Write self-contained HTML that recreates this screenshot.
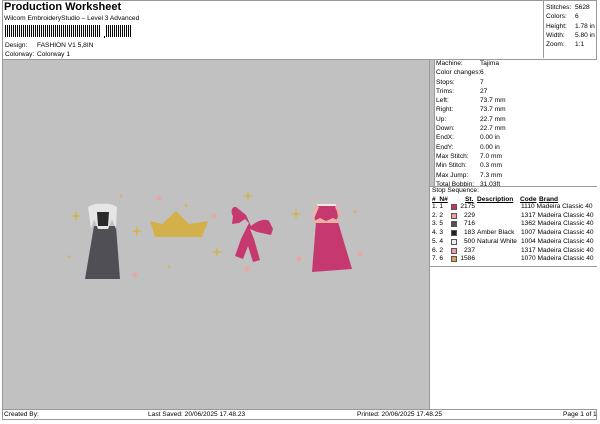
<!DOCTYPE html><html><head><style>
body{margin:0;width:600px;height:424px;background:#fff;position:relative;font-family:"Liberation Sans",Arial,sans-serif;font-size:6.6px;color:#000;overflow:hidden}
.a{position:absolute;white-space:nowrap}
</style></head><body>
<div class="a" style="left:2px;top:0;width:595px;height:420px;border:1px solid #999;box-sizing:border-box"></div>
<div class="a" style="left:4px;top:1px;font-size:11px;font-weight:bold">Production Worksheet</div>
<div class="a" style="left:4px;top:15px;font-size:6.6px">Wilcom EmbroideryStudio – Level 3 Advanced</div>
<div class="a" style="left:5px;top:25px;width:96px;height:12px;background:repeating-linear-gradient(90deg,#000 0 1px,#fff 1px 2px,#000 2px 3px,#fff 3px 4px)"></div>
<div class="a" style="left:104px;top:36px;width:1px;height:2px;background:#000"></div>
<div class="a" style="left:106px;top:25px;width:25px;height:12px;background:repeating-linear-gradient(90deg,#000 0 1px,#fff 1px 2px,#000 2px 3px,#fff 3px 4px)"></div>
<div class="a" style="left:5px;top:42px">Design:</div><div class="a" style="left:37px;top:42px">FASHION V1 5,8IN</div>
<div class="a" style="left:5px;top:51px">Colorway:</div><div class="a" style="left:37px;top:51px">Colorway 1</div>
<div class="a" style="left:543px;top:0;width:54px;height:58px;border-left:1px solid #999"></div>
<div class="a" style="left:546px;top:3px;line-height:9.3px">Stitches:<br>Colors:<br>Height:<br>Width:<br>Zoom:</div>
<div class="a" style="left:575px;top:3px;line-height:9.3px">5628<br>6<br>1.78 in<br>5.80 in<br>1:1</div>
<div class="a" style="left:3px;top:59px;width:594px;height:1px;background:#999"></div>
<div class="a" style="left:3px;top:60px;width:431px;height:349px;background:#c1c1c1"></div>
<div class="a" style="left:429px;top:60px;width:1px;height:349px;background:#999"></div>
<div class="a" style="left:434px;top:60px;width:163px;height:126px;background:#fff;border-left:1px solid #999"></div>
<div class="a" style="left:430px;top:186px;width:167px;height:223px;background:#fff"></div>
<div class="a" style="left:436px;top:59px;line-height:9.3px">Machine:<br>Color changes:<br>Stops:<br>Trims:<br>Left:<br>Right:<br>Up:<br>Down:<br>EndX:<br>EndY:<br>Max Stitch:<br>Min Stitch:<br>Max Jump:<br>Total Bobbin:</div>
<div class="a" style="left:480px;top:59px;line-height:9.3px">Tajima<br>6<br>7<br>27<br>73.7 mm<br>73.7 mm<br>22.7 mm<br>22.7 mm<br>0.00 in<br>0.00 in<br>7.0 mm<br>0.3 mm<br>7.3 mm<br>31.03ft</div>
<div class="a" style="left:430px;top:186px;width:167px;height:1px;background:#999"></div>
<div class="a" style="left:432px;top:187px">Stop Sequence:</div>
<div class="a" style="left:432px;top:196px;font-weight:bold;text-decoration:underline">#&nbsp; N#</div>
<div class="a" style="left:465px;top:196px;font-weight:bold;text-decoration:underline">St.</div>
<div class="a" style="left:477px;top:196px;font-weight:bold;text-decoration:underline">Description</div>
<div class="a" style="left:520px;top:196px;font-weight:bold;text-decoration:underline">Code</div>
<div class="a" style="left:539px;top:196px;font-weight:bold;text-decoration:underline">Brand</div>
<div class="a" style="left:432px;top:203px;line-height:8.7px">1. 1<br>2. 2<br>3. 5<br>4. 3<br>5. 4<br>6. 2<br>7. 6</div>
<div class="a" style="left:451px;top:204px;width:6px;height:6px;background:#c8306c;border:1px solid #555;box-sizing:border-box"></div>
<div class="a" style="left:451px;top:212.7px;width:6px;height:6px;background:#f0a0a0;border:1px solid #555;box-sizing:border-box"></div>
<div class="a" style="left:451px;top:221.4px;width:6px;height:6px;background:#505060;border:1px solid #555;box-sizing:border-box"></div>
<div class="a" style="left:451px;top:230.1px;width:6px;height:6px;background:#222;border:1px solid #555;box-sizing:border-box"></div>
<div class="a" style="left:451px;top:238.8px;width:6px;height:6px;background:#eeeef4;border:1px solid #555;box-sizing:border-box"></div>
<div class="a" style="left:451px;top:247.5px;width:6px;height:6px;background:#f0a0a0;border:1px solid #555;box-sizing:border-box"></div>
<div class="a" style="left:451px;top:256.2px;width:6px;height:6px;background:#d8a060;border:1px solid #555;box-sizing:border-box"></div>
<div class="a" style="left:458px;top:203px;line-height:8.7px;width:17px;text-align:right">2175<br>229<br>716<br>183<br>500<br>237<br>1586</div>
<div class="a" style="left:477px;top:203px;line-height:8.7px"><br><br><br>Amber Black<br>Natural White</div>
<div class="a" style="left:521px;top:203px;line-height:8.7px">1110 Madeira Classic 40<br>1317 Madeira Classic 40<br>1362 Madeira Classic 40<br>1007 Madeira Classic 40<br>1004 Madeira Classic 40<br>1317 Madeira Classic 40<br>1070 Madeira Classic 40</div>
<div class="a" style="left:430px;top:266px;width:167px;height:1px;background:#999"></div>
<div class="a" style="left:3px;top:409px;width:594px;height:1px;background:#999"></div>
<div class="a" style="left:4px;top:411px">Created By:</div>
<div class="a" style="left:148px;top:411px">Last Saved: 20/06/2025 17.48.23</div>
<div class="a" style="left:357px;top:411px">Printed: 20/06/2025 17.48.25</div>
<div class="a" style="left:563px;top:411px">Page 1 of 1</div>
<svg class="a" style="left:0;top:0" width="600" height="424">
<g fill="#d4b44c">
<path d="M76 210l1 5 5 1-5 1-1 5-1-5-5-1 5-1z"/><path d="M137 225l1 5 5 1-5 1-1 5-1-5-5-1 5-1z"/>
<path d="M248 190l1 5 5 1-5 1-1 5-1-5-5-1 5-1z"/><path d="M217 246l1 5 5 1-5 1-1 5-1-5-5-1 5-1z"/>
<path d="M296 208l1 5 5 1-5 1-1 5-1-5-5-1 5-1z"/>
<path d="M121 193l.6 2 2 .6-2 .6-.6 2-.6-2-2-.6 2-.6z"/><path d="M186 203l.6 2 2 .6-2 .6-.6 2-.6-2-2-.6 2-.6z"/>
<path d="M69 254l.6 2 2 .6-2 .6-.6 2-.6-2-2-.6 2-.6z"/><path d="M169 264l.6 2 2 .6-2 .6-.6 2-.6-2-2-.6 2-.6z"/>
<path d="M355 209l.6 2 2 .6-2 .6-.6 2-.6-2-2-.6 2-.6z"/>
</g>
<g fill="#e8a8a0"><circle cx="159" cy="198" r="2.5"/><circle cx="214" cy="216" r="2.5"/><circle cx="135" cy="275" r="2.5"/><circle cx="247" cy="269" r="2.5"/><circle cx="299" cy="259" r="2.5"/><circle cx="360" cy="254" r="2.5"/></g>
<path d="M94 226h22l4 53h-35z" fill="#4f4f55"/>
<path d="M88 207c5-3 10-4 14-3 5-1 10 0 15 3l-1 22-4-10-4 10h-10l-4-10-3 10z" fill="#e6e6e6"/>
<path d="M97 212h12l-1 14h-10z" fill="#2a2a2a"/>
<path d="M150 221l12 3 14-13 13 13 19-3-6 16h-47z" fill="#d4b04a"/>
<path d="M246 215l-10-8c-4-1-6 5-3 9l-1 8 7-1 6-4 4 4-8 16-6 17 8 3 5-13 5 16 7-2-6-21-4-10 7 3 14 3 2-6-4-8c-4-3-12 0-18 5z" fill="#c53870"/>
<path d="M318 205h18l2 12-3 5h-19l-2-5z" fill="#c53870"/>
<path d="M316 222h22l14 47-40 3z" fill="#c53870"/>
<path d="M317 204h19v2h-19z" fill="#f0e8e0"/>
<path d="M316 205l-4 13 2 1 5-12zM337 205l5 12-2 1-5-11z" fill="#f0b0a0"/>
<path d="M314 221l6-3 6 3 7-3 6 3v2h-25z" fill="#f0b0a0"/>
</svg>
</body></html>
